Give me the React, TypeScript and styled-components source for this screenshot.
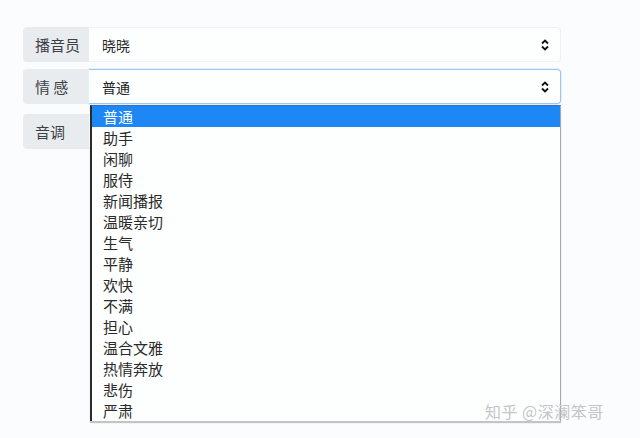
import React from "react";
import styled, { createGlobalStyle } from "styled-components";

const Global = createGlobalStyle`
  html, body { margin: 0; padding: 0; background: #fbfcfd; }
  body { font-family: "Noto Sans CJK SC", "Noto Sans", sans-serif; color: #333; }
`;

const Page = styled.div`
  position: relative;
  width: 640px;
  height: 438px;
  overflow: hidden;
  box-sizing: border-box;
  padding: 27px 0 0 23px;
`;

const Form = styled.div`
  display: flex;
  flex-direction: column;
  width: 538px;
`;

const Row = styled.div<{ $mb: number }>`
  position: relative;
  display: flex;
  height: 35px;
  margin-bottom: ${(p) => p.$mb}px;
`;

const Label = styled.div`
  width: 66px;
  box-sizing: border-box;
  padding-left: 12px;
  display: flex;
  align-items: center;
  background: #e9ecef;
  border-radius: 4px 0 0 4px;
  font-size: 15px;
  color: #3c4146;
`;

const Select = styled.div<{ $focus?: boolean }>`
  flex: 1;
  display: flex;
  align-items: center;
  justify-content: space-between;
  box-sizing: border-box;
  padding: 0 11px 0 13px;
  background: #fdfefe;
  border: 1px solid ${(p) => (p.$focus ? "#9cc6ee" : "#eef0f2")};
  border-left: none;
  border-radius: 0 4px 4px 0;
  box-shadow: ${(p) => (p.$focus ? "0 0 0 1px #e3f0fb" : "none")};
  font-size: 14px;
  color: #222;
`;

const Menu = styled.div`
  position: absolute;
  left: 67px;
  top: 36px;
  width: 471px;
  box-sizing: border-box;
  background: #fdfefe;
  border-left: 2px solid #2b2b2b;
  border-right: 1px solid #a9a9a9;
  border-top: 1px solid #3a6fb8;
  box-shadow: 0 2px 1px rgba(0, 0, 0, 0.22);
  z-index: 2;
`;

const Item = styled.div<{ $active?: boolean }>`
  height: 21px;
  line-height: 21px;
  padding-left: 11px;
  font-size: 15px;
  color: ${(p) => (p.$active ? "#fff" : "#2a2a2a")};
  background: ${(p) => (p.$active ? "#1c87f5" : "transparent")};
`;

const Watermark = styled.div`
  position: absolute;
  left: 485px;
  top: 399px;
  font-size: 16px;
  letter-spacing: 0.5px;
  color: #c3c6c9;
  z-index: 3;
`;

const Arrows = () => (
  <svg width="8" height="12" viewBox="0 0 8 12">
    <path d="M1 4.5 L4 1.5 L7 4.5" fill="none" stroke="#111" strokeWidth="1.8" />
    <path d="M1 7.5 L4 10.5 L7 7.5" fill="none" stroke="#111" strokeWidth="1.8" />
  </svg>
);

const options = [
  "普通", "助手", "闲聊", "服侍", "新闻播报", "温暖亲切", "生气", "平静",
  "欢快", "不满", "担心", "温合文雅", "热情奔放", "悲伤", "严肃",
];

export default function App() {
  return (
    <>
      <Global />
      <Page>
        <Form>
          <Row $mb={7}>
            <Label>播音员</Label>
            <Select>
              <span>晓晓</span>
              <Arrows />
            </Select>
          </Row>
          <Row $mb={10}>
            <Label>情 感</Label>
            <Select $focus>
              <span>普通</span>
              <Arrows />
            </Select>
            <Menu>
              {options.map((o, i) => (
                <Item key={o} $active={i === 0}>{o}</Item>
              ))}
            </Menu>
          </Row>
          <Row $mb={0}>
            <Label>音调</Label>
            <Select />
          </Row>
        </Form>
        <Watermark>知乎 @深澜笨哥</Watermark>
      </Page>
    </>
  );
}
